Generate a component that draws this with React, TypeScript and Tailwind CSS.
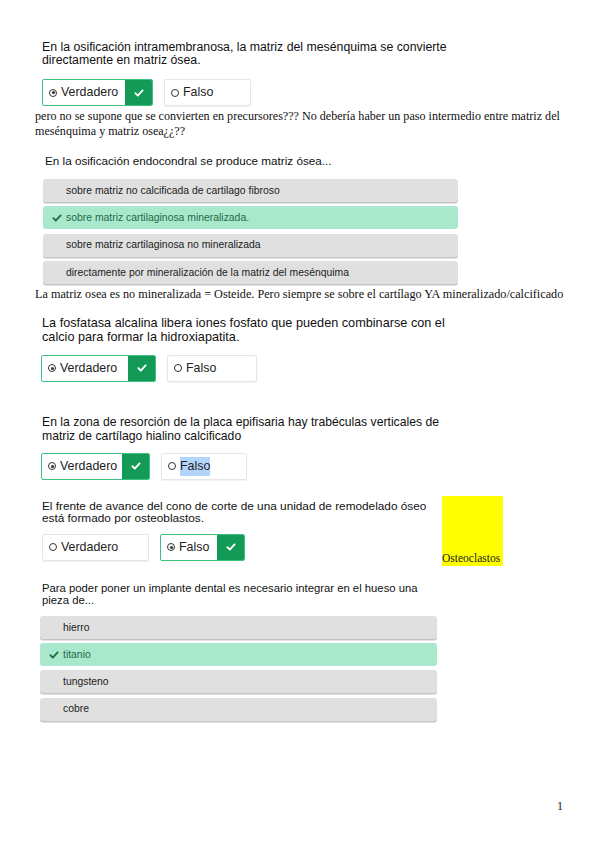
import React from "react";

const sans = { fontFamily: '"Liberation Sans", Arial, sans-serif' };
const serif = { fontFamily: '"Liberation Serif", "Times New Roman", serif' };

function Radio({ on }: { on?: boolean }) {
  return (
    <span className="flex h-[8px] w-[8px] shrink-0 items-center justify-center rounded-full border border-[#333]">
      {on && <span className="h-[3px] w-[3px] rounded-full bg-[#333]" />}
    </span>
  );
}

function Check({ className = "" }: { className?: string }) {
  return (
    <svg viewBox="0 0 12 10" className={className} fill="none" stroke="currentColor" strokeWidth="2.4" strokeLinecap="round" strokeLinejoin="round">
      <path d="M1.5 5.2l3 3L10.5 1.8" />
    </svg>
  );
}

type TF = {
  verdW: number;
  falsoW: number;
  answer: "v" | "f";
  highlightFalso?: boolean;
};

function TrueFalse({ verdW, falsoW, answer, highlightFalso }: TF) {
  const box = (label: string, w: number, picked: boolean, hl?: boolean) => (
    <div
      className={`flex h-[27px] items-stretch overflow-hidden rounded-[2px] bg-white text-[12.4px] text-[#222] ${
        picked ? "border border-[#3fbf80]" : "border border-[#e6e6e6] shadow-[0_1px_1px_rgba(0,0,0,0.06)]"
      }`}
      style={{ width: w }}
    >
      <div className="flex flex-1 items-center gap-[4px] pl-[6px]">
        <Radio on={picked} />
        <span className={hl ? "bg-[#b4d5fb]" : ""}>{label}</span>
      </div>
      {picked && (
        <div className="flex w-[27px] items-center justify-center bg-[#139a57] text-white">
          <Check className="h-[8px] w-[10px]" />
        </div>
      )}
    </div>
  );
  return (
    <div className="flex gap-[11px]">
      {box("Verdadero", verdW, answer === "v")}
      {box("Falso", falsoW, answer === "f", highlightFalso)}
    </div>
  );
}

function Options({ items, correct, width }: { items: string[]; correct: number; width: number }) {
  return (
    <div className="flex flex-col gap-[4.3px]" style={{ width }}>
      {items.map((t, i) => {
        const ok = i === correct;
        return (
          <div
            key={t}
            className={`flex h-[23px] items-center rounded-[3px] text-[10.4px] ${
              ok
                ? "bg-[#aae8cd] text-[#1d6b45]"
                : "bg-[#e0e0e0] text-[#222] shadow-[0_1.5px_0_#c4c4c4]"
            }`}
          >
            <span className="flex w-[23px] justify-end pr-[4px]">
              {ok && <Check className="h-[8px] w-[10px] text-[#1f6e45]" />}
            </span>
            <span>{t}</span>
          </div>
        );
      })}
    </div>
  );
}

export default function App() {
  return (
    <div className="relative min-h-[848px] w-[599px] bg-white pt-[41px] text-[#111]">
      {/* 1 */}
      <div className="pl-[42px]" style={sans}>
        <p className="whitespace-nowrap text-[12.3px] leading-[13px] text-[#111]">
          En la osificación intramembranosa, la matriz del mesénquima se convierte
          <br />
          directamente en matriz ósea.
        </p>
        <div className="mt-[12px]">
          <TrueFalse verdW={111} falsoW={87} answer="v" />
        </div>
      </div>
      <p className="mt-[3px] whitespace-nowrap pl-[35px] text-[12.1px] leading-[15px]" style={serif}>
        pero no se supone que se convierten en precursores??? No debería haber un paso intermedio entre matriz del
        <br />
        mesénquima y matriz osea¿¿??
      </p>

      {/* 2 */}
      <div className="mt-[15px] pl-[43px]" style={sans}>
        <p className="whitespace-nowrap pl-[2px] text-[11.7px] leading-[14px]">
          En la osificación endocondral se produce matriz ósea...
        </p>
        <div className="mt-[11px]">
          <Options
            width={415}
            correct={1}
            items={[
              "sobre matriz no calcificada de cartilago fibroso",
              "sobre matriz cartilaginosa mineralizada.",
              "sobre matriz cartilaginosa no mineralizada",
              "directamente por mineralización de la matriz del mesénquima",
            ]}
          />
        </div>
      </div>
      <p className="mt-[3px] whitespace-nowrap pl-[35px] text-[12.2px] leading-[15px]" style={serif}>
        La matriz osea es no mineralizada = Osteide. Pero siempre se sobre el cartílago YA mineralizado/calcificado
      </p>

      {/* 3 */}
      <div className="mt-[14px] pl-[42px]" style={sans}>
        <p className="whitespace-nowrap text-[12.7px] leading-[14px]">
          La fosfatasa alcalina libera iones fosfato que pueden combinarse con el
          <br />
          calcio para formar la hidroxiapatita.
        </p>
        <div className="-ml-[1px] mt-[11px]">
          <TrueFalse verdW={115} falsoW={90} answer="v" />
        </div>
      </div>

      {/* 4 */}
      <div className="mt-[33px] pl-[42px]" style={sans}>
        <p className="whitespace-nowrap text-[12.2px] leading-[14px]">
          En la zona de resorción de la placa epifisaria hay trabéculas verticales de
          <br />
          matriz de cartílago hialino calcificado
        </p>
        <div className="-ml-[1px] mt-[10px]">
          <TrueFalse verdW={109} falsoW={86} answer="v" highlightFalso />
        </div>
      </div>

      {/* 5 */}
      <div className="mt-[20px] flex" style={sans}>
        <div className="w-[400px] pl-[42px]">
          <p className="whitespace-nowrap text-[11.8px] leading-[12.5px]">
            El frente de avance del cono de corte de una unidad de remodelado óseo
            <br />
            está formado por osteoblastos.
          </p>
          <div className="mt-[9px]">
            <TrueFalse verdW={107} falsoW={85} answer="f" />
          </div>
        </div>
        <div className="-mt-[4px] ml-[42px] flex h-[70px] w-[61px] items-end bg-[#ffff00] pb-[1px]">
          <span className="text-[11.5px] leading-[13px] text-[#222]" style={serif}>
            Osteoclastos
          </span>
        </div>
      </div>

      {/* 6 */}
      <div className="mt-[16px] pl-[40px]" style={sans}>
        <p className="whitespace-nowrap pl-[2px] text-[11.3px] leading-[12px]">
          Para poder poner un implante dental es necesario integrar en el hueso una
          <br />
          pieza de...
        </p>
        <div className="mt-[10px]">
          <Options width={397} correct={1} items={["hierro", "titanio", "tungsteno", "cobre"]} />
        </div>
      </div>

      <p className="absolute left-[557px] top-[797px] text-[12px]" style={serif}>
        1
      </p>
    </div>
  );
}
